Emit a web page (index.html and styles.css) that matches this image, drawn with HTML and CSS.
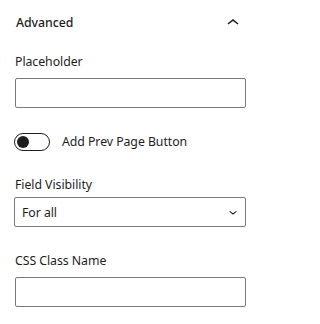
FILE: index.html
```html
<!DOCTYPE html>
<html>
<head>
<meta charset="utf-8">
<link rel="stylesheet" href="styles.css">
</head>
<body>
<div class="panel">
  <div class="panel-header">
    <span class="panel-title">Advanced</span>
    <svg class="chev-up" viewBox="0 0 24 24" width="24" height="24"><path d="M6.5 12.4L12 8l5.5 4.4-.9 1.2L12 10l-4.6 3.6-1-1.2z"/></svg>
  </div>
  <div class="field field-placeholder">
    <label class="label">Placeholder</label>
    <div class="input"></div>
  </div>
  <div class="toggle-row">
    <span class="toggle"><span class="knob"></span></span>
    <span class="toggle-label">Add Prev Page Button</span>
  </div>
  <div class="field field-visibility">
    <label class="label">Field Visibility</label>
    <div class="select">
      <span>For all</span>
      <svg class="chev-down" viewBox="0 0 24 24" width="16" height="16"><path d="M17.5 11.6L12 16l-5.5-4.4.9-1.2L12 14l4.6-3.6 1 1.2z"/></svg>
    </div>
  </div>
  <div class="field field-css">
    <label class="label">CSS Class Name</label>
    <div class="input"></div>
  </div>
</div>
</body>
</html>
```
FILE: styles.css
```css
html, body {
  margin: 0;
  padding: 0;
  background: #fff;
}
body {
  font-family: "Noto Sans", "Open Sans", sans-serif;
  font-size: 12.3px;
  letter-spacing: -0.05px;
  color: #1e1e1e;
}
.panel {
  width: 261px;
  padding: 0 15px;
  box-sizing: border-box;
}
.panel-header {
  height: 46px;
  display: flex;
  align-items: center;
  justify-content: space-between;
}
.panel-title {
  font-weight: 500;
  line-height: 18px;
  padding-left: 1px;
}
.chev-up {
  fill: #1e1e1e;
  margin-right: 1px;
}
.field {
  display: flex;
  flex-direction: column;
}
.label {
  display: block;
  line-height: 18px;
}
.field-placeholder {
  margin-top: 7px;
}
.field-placeholder .label {
  margin-bottom: 7px;
}
.input {
  height: 30px;
  border: 1px solid #7a7a7a;
  border-radius: 2px;
  box-sizing: border-box;
}
.toggle-row {
  display: flex;
  align-items: center;
  margin-top: 25px;
  height: 18px;
}
.toggle {
  width: 36px;
  height: 18px;
  border: 1px solid #1e1e1e;
  border-radius: 9px;
  box-sizing: border-box;
  display: flex;
  align-items: center;
  padding-left: 2px;
  margin-left: -1px;
}
.knob {
  width: 12px;
  height: 12px;
  border-radius: 50%;
  background: #1e1e1e;
}
.toggle-label {
  margin-left: 12px;
  line-height: 18px;
}
.field-visibility {
  margin-top: 25px;
}
.field-visibility .label {
  margin-bottom: 3px;
}
.select {
  height: 30px;
  border: 1px solid #7a7a7a;
  border-radius: 2px;
  box-sizing: border-box;
  display: flex;
  align-items: center;
  justify-content: space-between;
  padding: 0 4px 0 7px;
  margin-left: -1px;
}
.chev-down {
  fill: #1e1e1e;
}
.field-css {
  margin-top: 25px;
}
.field-css .label {
  margin-bottom: 7px;
}
```
